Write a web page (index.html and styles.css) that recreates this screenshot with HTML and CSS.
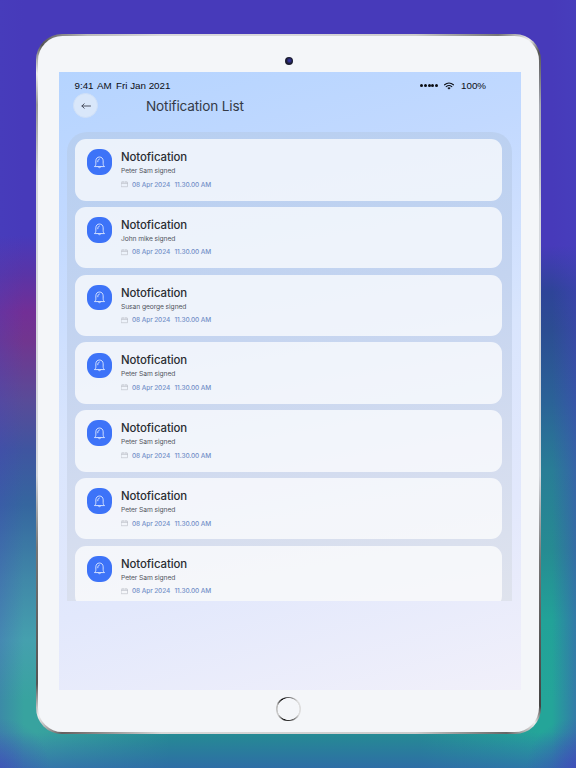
FILE: index.html
```
<!DOCTYPE html>
<html lang="en">
  <head>
    <meta charset="UTF-8" />
    <meta name="viewport" content="width=device-width, initial-scale=1.0" />
    <title>Notification List</title>
    <link rel="stylesheet" href="styles.css">
  </head>
  <body>
    <!-- icons used in the list -->
    <svg class="sprite" width="0" height="0">
      <symbol id="bell" viewBox="0 0 12 14">
        <path d="M.8 11.2c.9-.7 1.2-1.5 1.2-2.8V5.2C2 2.6 3.7 1 6 1s4 1.6 4 4.2v3.2c0 1.3.3 2.1 1.2 2.8zM4.4 11.4c.3 1.8 2.9 1.8 3.2 0M4.1 6.2c-.1-1.7.6-2.7 1.8-3" />
      </symbol>
      <symbol id="calendar" viewBox="0 0 7 7">
        <path d="M.5 1.1h6v4.6h-6zM.5 2.5h6M2 .3v1M5 .3v1" />
      </symbol>
    </svg>

    <div class="tablet">
      <div class="bezel">
        <div class="camera"></div>
        <div class="screen">
          <div class="status">
            <span class="time">9:41</span>
            <span class="ampm">AM</span>
            <span class="date">Fri Jan 2021</span>
            <div class="signal"><i></i><i></i><i></i><i></i><i></i></div>
            <svg class="wifi" viewBox="0 0 10 8">
              <path d="M.6 2.8Q5-.8 9.4 2.8M2.2 4.6Q5 2.3 7.8 4.6" />
              <path class="dot" d="M3.4 5.9Q5 4.7 6.6 5.9L5 7.6z" />
            </svg>
            <span class="battery">100%</span>
          </div>
          <div class="header">
            <div class="back">
              <svg viewBox="0 0 10 6"><path d="M9.5 3H1M3.2.8L.9 3l2.3 2.2" /></svg>
            </div>
            <h1>Notification List</h1>
          </div>

          <div class="list">
            <div class="card">
              <div class="icon"><svg><use href="#bell" /></svg></div>
              <div class="info">
                <h2>Notofication</h2>
                <p>Peter Sam signed</p>
                <div class="when"><svg><use href="#calendar" /></svg><span class="day">08 Apr 2024</span><span class="hour">11.30.00 AM</span></div>
              </div>
            </div>
            <div class="card">
              <div class="icon"><svg><use href="#bell" /></svg></div>
              <div class="info">
                <h2>Notofication</h2>
                <p>John mike signed</p>
                <div class="when"><svg><use href="#calendar" /></svg><span class="day">08 Apr 2024</span><span class="hour">11.30.00 AM</span></div>
              </div>
            </div>
            <div class="card">
              <div class="icon"><svg><use href="#bell" /></svg></div>
              <div class="info">
                <h2>Notofication</h2>
                <p>Susan george signed</p>
                <div class="when"><svg><use href="#calendar" /></svg><span class="day">08 Apr 2024</span><span class="hour">11.30.00 AM</span></div>
              </div>
            </div>
            <div class="card">
              <div class="icon"><svg><use href="#bell" /></svg></div>
              <div class="info">
                <h2>Notofication</h2>
                <p>Peter Sam signed</p>
                <div class="when"><svg><use href="#calendar" /></svg><span class="day">08 Apr 2024</span><span class="hour">11.30.00 AM</span></div>
              </div>
            </div>
            <div class="card">
              <div class="icon"><svg><use href="#bell" /></svg></div>
              <div class="info">
                <h2>Notofication</h2>
                <p>Peter Sam signed</p>
                <div class="when"><svg><use href="#calendar" /></svg><span class="day">08 Apr 2024</span><span class="hour">11.30.00 AM</span></div>
              </div>
            </div>
            <div class="card">
              <div class="icon"><svg><use href="#bell" /></svg></div>
              <div class="info">
                <h2>Notofication</h2>
                <p>Peter Sam signed</p>
                <div class="when"><svg><use href="#calendar" /></svg><span class="day">08 Apr 2024</span><span class="hour">11.30.00 AM</span></div>
              </div>
            </div>
            <div class="card">
              <div class="icon"><svg><use href="#bell" /></svg></div>
              <div class="info">
                <h2>Notofication</h2>
                <p>Peter Sam signed</p>
                <div class="when"><svg><use href="#calendar" /></svg><span class="day">08 Apr 2024</span><span class="hour">11.30.00 AM</span></div>
              </div>
            </div>
          </div>
        </div>
        <div class="home"></div>
      </div>
    </div>
  </body>
</html>
```
FILE: styles.css
```
* {
  box-sizing: border-box;
}
body {
  margin: 0;
  width: 576px;
  height: 768px;
  overflow: hidden;
  padding: 34px 0 0 36px;
  font-family: Inter, "Liberation Sans", sans-serif;
  /* fades at the page edges, bottom band, left side, right side */
  background:
    radial-gradient(ellipse 50px 50px at 0 768px, rgba(68, 68, 190, 0.5), rgba(68, 68, 190, 0)),
    radial-gradient(ellipse 50px 50px at 576px 768px, rgba(68, 68, 190, 0.6), rgba(68, 68, 190, 0)),
    linear-gradient(to right, rgba(71, 66, 190, 0.25), rgba(71, 66, 190, 0) 24px, rgba(71, 66, 190, 0) 552px, rgba(71, 66, 190, 0.42)),
    linear-gradient(to bottom, transparent 732px, rgba(52, 88, 178, 0.75) 778px),
    linear-gradient(to right, transparent 36px, #258c93 170px, #258c93 420px, transparent 540px) 0 700px / 576px 68px no-repeat,
    linear-gradient(to bottom, #473aba 235px, #5a34a6 275px, #722f96 312px, #71358f 340px, #594b98 400px, #3f55a0 450px, #35669f 505px, #4088a8 580px, #45a0ae 640px, #38a39f 700px) 0 0 / 288px 768px no-repeat,
    linear-gradient(to bottom, #473aba 245px, #2e4498 292px, #2c4d92 330px, #2b6297 400px, #297d96 470px, #268b92 550px, #22a298 620px, #24a599 700px) 288px 0 / 288px 768px no-repeat;
}
.sprite {
  position: absolute;
}
svg {
  fill: none;
  stroke-linecap: round;
  stroke-linejoin: round;
}
.tablet {
  width: 504.5px;
  height: 699.5px;
  padding: 1.5px;
  border-radius: 26px;
  background: conic-gradient(#d8d8db 0deg, #ccc 20deg, #777 31deg, #eee 35deg, #555 37deg, #a5a8b0 42deg, #d5d8dd 55deg, #d5d8dd 110deg, #777 125deg, #444 142deg, #eee 144deg, #666 148deg, #ccc 160deg, #d8d8d8 200deg, #655f5f 213deg, #eee 217deg, #555 220deg, #777 237deg, #d5d8dd 250deg, #d5d8dd 310deg, #999 318deg, #eee 321deg, #555 324deg, #bbb 330deg, #d8d8db 340deg);
}
.bezel {
  display: flex;
  flex-direction: column;
  align-items: center;
  width: 501.5px;
  height: 696.5px;
  border-radius: 24.5px;
  background: #f4f6f9;
}
.camera {
  flex: none;
  width: 8px;
  height: 8px;
  margin: 21.5px 0 6.5px 1px;
  border-radius: 50%;
  background: radial-gradient(circle at 55% 45%, #3434a0 10%, #1b1c30 50%);
}
.screen {
  flex: none;
  width: 461.5px;
  height: 618.5px;
  margin-left: 3px;
  background: linear-gradient(165deg, #b5d4ff 0%, #c2d9ff 22%, #d9e5fd 50%, #e2e8fc 74%, #f1f0fa 100%);
}
.status {
  display: flex;
  align-items: center;
  height: 22px;
  padding: 6px 0 0 15.5px;
  font-family: "Liberation Sans", Arial, sans-serif;
  font-size: 9.8px;
  line-height: 12px;
  color: #0b0e14;
}
.time {
  width: 22.5px;
}
.ampm {
  width: 19px;
}
.date {
  width: 304px;
}
.signal {
  display: flex;
  gap: 0.8px;
  width: 23.5px;
}
.signal i {
  width: 3px;
  height: 3px;
  border-radius: 50%;
  background: #0b0e14;
}
.wifi {
  width: 10px;
  height: 8px;
  margin-right: 7.5px;
  stroke: #0b0e14;
  stroke-width: 1.1;
}
.wifi .dot {
  fill: #0b0e14;
  stroke: none;
}
.header {
  display: flex;
  align-items: center;
  height: 24px;
  padding-left: 14px;
}
.back {
  display: flex;
  align-items: center;
  justify-content: center;
  width: 25px;
  height: 25px;
  margin-right: 48px;
  border: 1px solid #cfe0f8;
  border-radius: 50%;
  background: #d9e7fa;
}
.back svg {
  width: 10px;
  height: 6px;
  stroke: #3c4250;
  stroke-width: 0.9;
}
h1 {
  margin: 0;
  font-size: 13.6px;
  font-weight: 400;
  line-height: 20px;
  letter-spacing: -0.15px;
  white-space: nowrap;
  color: #343a46;
}
.list {
  display: flex;
  flex-direction: column;
  gap: 6.3px;
  width: 444.5px;
  height: 469px;
  margin: 14.5px 0 0 8px;
  padding: 7px 10px 0 8px;
  overflow: hidden;
  border-radius: 20px 20px 0 0;
  background: linear-gradient(170deg, #b7cff1 0%, #c4d4f0 40%, #d5ddef 75%, #dfe3ed 100%);
}
.card {
  display: flex;
  flex: none;
  height: 61.5px;
  padding: 10.3px 0 0 11.5px;
  border-radius: 11px;
  background: rgba(255, 255, 255, 0.72);
}
.icon {
  display: flex;
  align-items: center;
  justify-content: center;
  width: 25.5px;
  height: 25.5px;
  border-radius: 11px;
  background: #3d73f8;
}
.icon svg {
  width: 11px;
  height: 13px;
  stroke: #dde8ff;
  stroke-width: 1;
}
.info {
  padding: 0.8px 0 0 9px;
}
h2 {
  margin: 0;
  font-size: 11.4px;
  font-weight: 500;
  line-height: 15px;
  letter-spacing: -0.08px;
  color: #2a2d32;
}
p {
  margin: 1px 0 0;
  font-size: 6.7px;
  line-height: 10px;
  letter-spacing: -0.08px;
  color: #51555e;
}
.when {
  display: flex;
  align-items: center;
  height: 10px;
  margin-top: 3.5px;
  font-size: 6.5px;
  font-weight: 500;
  line-height: 10px;
  letter-spacing: -0.1px;
  color: #7390c8;
}
.when svg {
  width: 7px;
  height: 7px;
  margin-right: 4px;
  stroke: #b9bcc4;
  stroke-width: 0.6;
}
.day {
  width: 42.5px;
}
.home {
  flex: none;
  width: 24.5px;
  height: 24.5px;
  margin: 6.5px 0 0;
  border-radius: 50%;
  background:
    radial-gradient(circle, #f4f6f9 10.6px, transparent 11.2px),
    conic-gradient(#666, #ddd 50deg, #ddd 120deg, #444 170deg, #111 200deg, #ccc 240deg, #bbb 290deg, #111 325deg, #666);
}
```
